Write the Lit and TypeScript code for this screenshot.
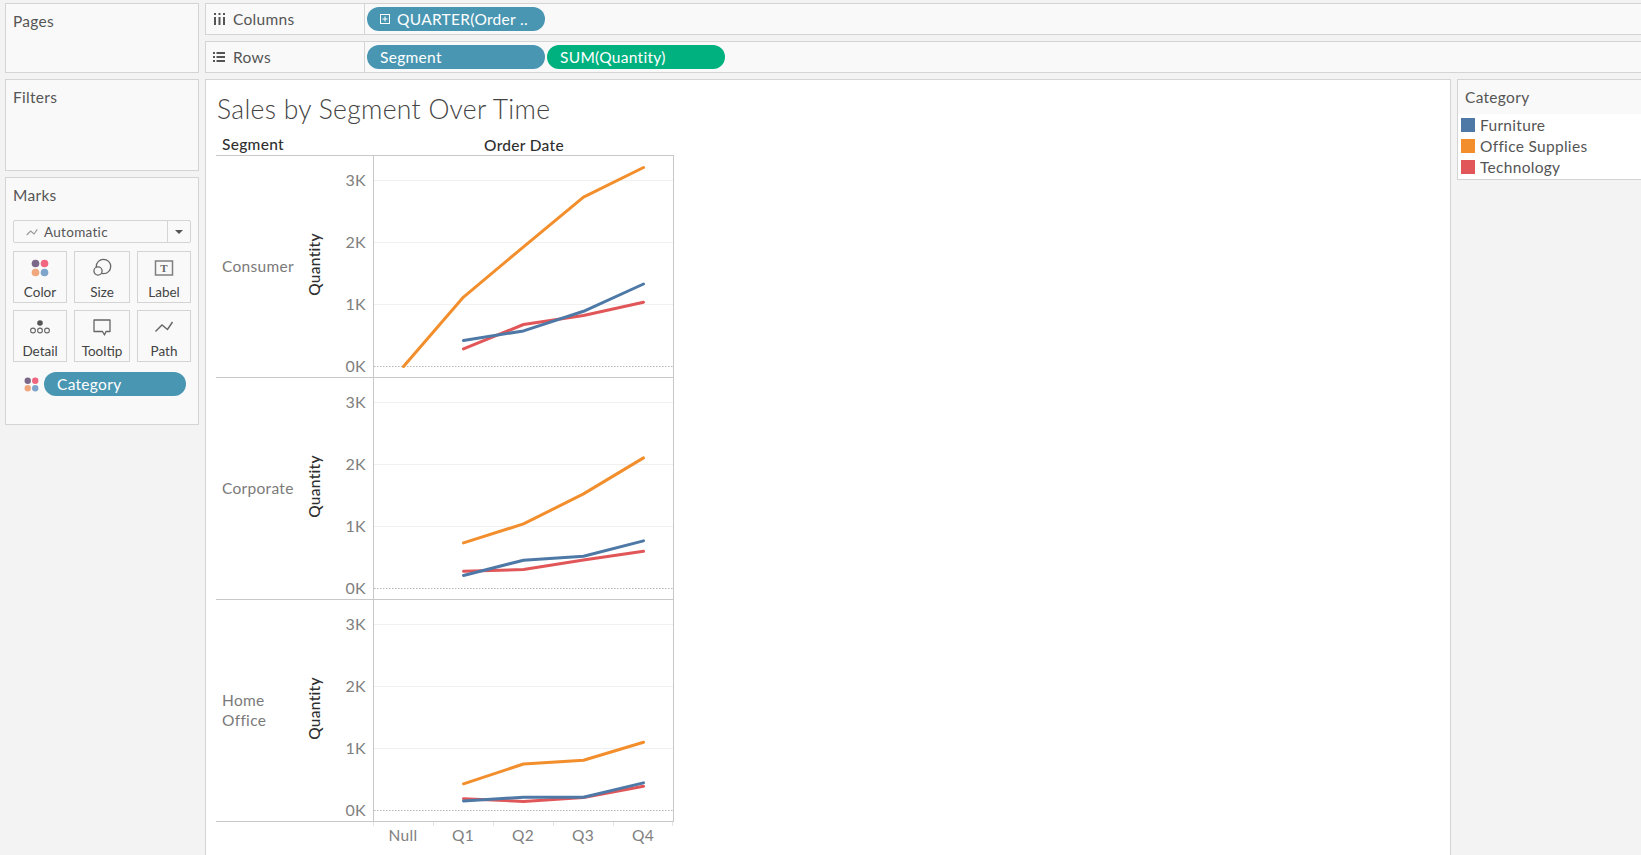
import { LitElement, html, css, svg } from "lit";
import { customElement } from "lit/decorators.js";

const COL = { blue: "#4e79a7", orange: "#f28e2b", red: "#e15759" };
const XS = [103.5, 163.5, 223.5, 283.5, 343.5];
const BASE = 210.5;
const K = 62;

type Facet = {
  label: unknown;
  orange: (number | null)[];
  red: (number | null)[];
  blue: (number | null)[];
};

const FACETS: Facet[] = [
  {
    label: "Consumer",
    orange: [0, 1.12, 1.93, 2.73, 3.21],
    red: [null, 0.284, 0.677, 0.823, 1.037],
    blue: [null, 0.42, 0.574, 0.89, 1.33],
  },
  {
    label: "Corporate",
    orange: [null, 0.735, 1.042, 1.526, 2.106],
    red: [null, 0.279, 0.306, 0.461, 0.6],
    blue: [null, 0.21, 0.456, 0.52, 0.768],
  },
  {
    label: html`Home<br />Office`,
    orange: [null, 0.43, 0.75, 0.81, 1.1],
    red: [null, 0.19, 0.145, 0.21, 0.39],
    blue: [null, 0.155, 0.215, 0.215, 0.445],
  },
];

const pts = (vals: (number | null)[]) =>
  vals
    .map((v, i) => (v === null ? null : `${XS[i]},${(BASE - v * K).toFixed(1)}`))
    .filter(Boolean)
    .join(" ");

const dots = (size: number) => html`<svg class="ico" width=${size} height=${size} viewBox="0 0 16 16">
  <circle cx="4" cy="4" r="3.4" fill="#7b6888"></circle>
  <circle cx="12" cy="4" r="3.4" fill="#f0657f"></circle>
  <circle cx="4" cy="12" r="3.4" fill="#f0a77e"></circle>
  <circle cx="12" cy="12" r="3.4" fill="#7fa4cc"></circle>
</svg>`;

const zig = (w: number, h: number, c: string) => html`<svg class="ico" width=${w} height=${h} viewBox="0 0 18 11">
  <path d="M1 10 L7 4 L12 8.5 L17 1.5" fill="none" stroke=${c} stroke-width="1.7"></path>
</svg>`;

const ICONS: Record<string, unknown> = {
  Color: dots(18),
  Size: html`<svg class="ico" width="20" height="20" viewBox="0 0 20 20">
    <circle cx="11.5" cy="8.5" r="7.2" fill="none" stroke="#666" stroke-width="1.3"></circle>
    <circle cx="6" cy="13" r="4.1" fill="#f9f9f9" stroke="#666" stroke-width="1.3"></circle>
  </svg>`,
  Label: html`<svg class="ico" width="20" height="20" viewBox="0 0 20 20">
    <rect x="1.5" y="3" width="17" height="14" fill="none" stroke="#7f7f7f" stroke-width="1.5"></rect>
    <text x="10" y="14" text-anchor="middle" font-family="Liberation Serif, serif" font-weight="700" font-size="11" fill="#666">T</text>
  </svg>`,
  Detail: html`<svg class="ico" width="20" height="20" viewBox="0 0 20 20">
    <circle cx="10" cy="6" r="2.8" fill="#555"></circle>
    <circle cx="3" cy="13.5" r="2.4" fill="none" stroke="#666" stroke-width="1.1"></circle>
    <circle cx="10" cy="13.5" r="2.4" fill="none" stroke="#666" stroke-width="1.1"></circle>
    <circle cx="17" cy="13.5" r="2.4" fill="none" stroke="#666" stroke-width="1.1"></circle>
  </svg>`,
  Tooltip: html`<svg class="ico" width="20" height="20" viewBox="0 0 20 20">
    <path d="M2 3 H18 V14.5 H14 L12.5 18 L10.5 14.5 H2 Z" fill="none" stroke="#666" stroke-width="1.3" stroke-linejoin="round"></path>
  </svg>`,
  Path: html`<svg class="ico" width="20" height="20" viewBox="0 0 20 20">
    <path d="M1.5 14.5 L8 8 L13.5 12.5 L18.5 5" fill="none" stroke="#666" stroke-width="1.4"></path>
  </svg>`,
};

const MARKS = ["Color", "Size", "Label", "Detail", "Tooltip", "Path"];

@customElement("app-root")
export class AppRoot extends LitElement {
  static styles = css`
    :host {
      display: block;
      font-family: "Lato", "Noto Sans", sans-serif;
      font-size: 15.5px;
      letter-spacing: 0.3px;
      color: #555;
    }
    .root {
      display: flex;
      gap: 6px;
      box-sizing: border-box;
      height: 855px;
      width: 1641px;
      padding: 3px 0 0 5px;
      overflow: hidden;
      background: #f3f3f3;
    }
    .left {
      display: flex;
      flex-direction: column;
      gap: 6px;
      width: 194px;
      flex: none;
    }
    .pane {
      box-sizing: border-box;
      border: 1px solid #d4d4d4;
      background: #f9f9f9;
    }
    .pane-title {
      line-height: 20px;
      padding: 7px 7px 0;
    }
    .pages { height: 70px; }
    .filters { height: 92px; }
    .marks { height: 248px; }
    .select {
      display: flex;
      align-items: center;
      box-sizing: border-box;
      height: 23px;
      margin: 15px 7px 8px;
      border: 1px solid #d4d4d4;
      border-radius: 2px;
      font-size: 13.5px;
    }
    .select-main {
      display: flex;
      align-items: center;
      gap: 6px;
      flex: 1;
      padding-left: 12px;
    }
    .select-arrow {
      display: flex;
      align-items: center;
      justify-content: center;
      width: 22px;
      height: 100%;
      border-left: 1px solid #d4d4d4;
    }
    .caret {
      width: 0;
      height: 0;
      border-left: 4px solid transparent;
      border-right: 4px solid transparent;
      border-top: 4px solid #555;
    }
    .ico { display: block; flex: none; }
    .cards {
      display: grid;
      grid-template-columns: 54px 56px 54px;
      grid-auto-rows: 52px;
      gap: 7px 7px;
      margin: 0 7px;
    }
    .card {
      display: flex;
      flex-direction: column;
      align-items: center;
      box-sizing: border-box;
      border: 1px solid #d4d4d4;
      padding-top: 6px;
      gap: 6px;
      font-size: 13.5px;
      letter-spacing: 0;
      line-height: 16px;
      color: #444;
    }
    .card .slot {
      display: flex;
      align-items: center;
      justify-content: center;
      height: 20px;
    }
    .mark-pill {
      display: flex;
      align-items: center;
      gap: 5px;
      margin: 10px 0 0 18px;
    }
    .pill {
      display: flex;
      align-items: center;
      box-sizing: border-box;
      height: 24px;
      width: 178px;
      border-radius: 12px;
      padding-left: 13px;
      background: #4996b2;
      color: #fff;
      flex: none;
      gap: 7px;
      white-space: nowrap;
    }
    .pill.green { background: #00b180; padding-left: 13px; }
    .mark-pill .pill { width: 142px; }
    .right {
      display: flex;
      flex-direction: column;
      gap: 6px;
      flex: 1;
      min-width: 0;
    }
    .shelf {
      display: flex;
      height: 32px;
      border-right: none;
    }
    .shelf-label {
      display: flex;
      align-items: center;
      box-sizing: border-box;
      width: 159px;
      flex: none;
      border-right: 1px solid #d4d4d4;
      padding-left: 7px;
      gap: 8px;
    }
    .shelf-pills {
      display: flex;
      gap: 2px;
      padding: 3px 0 0 2px;
    }
    .work {
      display: flex;
      gap: 6px;
      flex: 1;
      min-height: 0;
    }
    .view {
      box-sizing: border-box;
      width: 1246px;
      flex: none;
      border: 1px solid #d4d4d4;
      border-bottom: none;
      background: #fff;
      padding-left: 10px;
    }
    .title {
      margin: 14px 0 0 1px;
      line-height: 30px;
      font-size: 26.5px;
      font-weight: 300;
      color: #444;
      letter-spacing: 0.3px;
    }
    .heads {
      display: flex;
      align-items: flex-end;
      box-sizing: border-box;
      width: 458px;
      height: 32px;
      border-bottom: 1px solid #c8c8c8;
      line-height: 20px;
      font-weight: 500;
      color: #2f2f2f;
      font-size: 15.5px;
    }
    .head-seg {
      width: 158px;
      box-sizing: border-box;
      padding: 0 0 1px 6px;
      flex: none;
    }
    .head-date {
      width: 300px;
      text-align: center;
    }
    .facet {
      display: flex;
      box-sizing: border-box;
      width: 458px;
      height: 222px;
      border-bottom: 1px solid #c8c8c8;
    }
    .facet-label {
      display: flex;
      align-items: center;
      box-sizing: border-box;
      width: 84px;
      flex: none;
      padding: 0 0 1px 6px;
      line-height: 20.5px;
      color: #7a7a7a;
    }
    .plot { display: block; flex: none; }
    .plot text { font-family: "Lato", "Noto Sans", sans-serif; }
    .xticks {
      display: grid;
      grid-template-columns: repeat(5, 60px);
      margin-left: 157px;
      width: 301px;
    }
    .xcell { text-align: center; color: #808080; }
    .tick {
      height: 4px;
      border-left: 1px solid #e4e4e4;
    }
    .xcell:last-child .tick { border-right: 1px solid #e4e4e4; }
    .legend {
      flex: 1;
      align-self: flex-start;
      height: 101px;
      border-right: none;
      min-width: 0;
    }
    .legend-title {
      height: 34px;
      line-height: 34px;
      padding-left: 7px;
    }
    .legend-rows {
      background: #fff;
      padding: 0 0 0 3px;
      height: 65px;
      box-sizing: border-box;
    }
    .lrow {
      display: flex;
      align-items: center;
      gap: 5px;
      height: 21px;
      color: #555;
    }
    .swatch {
      width: 14px;
      height: 14px;
      flex: none;
    }
    .sw-blue { background: #4e79a7; }
    .sw-orange { background: #f28e2b; }
    .sw-red { background: #e15759; }
  `;

  private plot(f: Facet) {
    const ys = [3, 2, 1, 0];
    return html`<svg class="plot" width="374" height="221" viewBox="0 0 374 221">
      ${ys.map((v) => {
        const y = BASE - v * K;
        return svg`<line x1="74" x2="373" y1=${y} y2=${y}
            stroke=${v === 0 ? "#b5b5b5" : "#f0f0f0"} stroke-width="1"
            stroke-dasharray=${v === 0 ? "1.5 1.5" : "none"}></line>
          <text x="66" y=${y + 5.5} text-anchor="end" font-size="16" fill="#808080">${v}K</text>`;
      })}
      <line x1="73.5" x2="73.5" y1="0" y2="221" stroke="#c8c8c8"></line>
      <line x1="373.5" x2="373.5" y1="0" y2="221" stroke="#c8c8c8"></line>
      <text transform="translate(20 108.5) rotate(-90)" text-anchor="middle" font-size="15.5" font-weight="500" fill="#2f2f2f">Quantity</text>
      ${(["orange", "red", "blue"] as const).map(
        (k) => svg`<polyline points=${pts(f[k])} fill="none" stroke=${COL[k]} stroke-width="3"
          stroke-linecap="round" stroke-linejoin="round"></polyline>`
      )}
    </svg>`;
  }

  render() {
    return html`<div class="root">
      <div class="left">
        <div class="pane pages"><div class="pane-title">Pages</div></div>
        <div class="pane filters"><div class="pane-title">Filters</div></div>
        <div class="pane marks">
          <div class="pane-title">Marks</div>
          <div class="select">
            <div class="select-main">${zig(12, 8, "#999")}<span>Automatic</span></div>
            <div class="select-arrow"><div class="caret"></div></div>
          </div>
          <div class="cards">
            ${MARKS.map(
              (m) => html`<div class="card"><div class="slot">${ICONS[m]}</div><span>${m}</span></div>`
            )}
          </div>
          <div class="mark-pill">${dots(15)}<div class="pill">Category</div></div>
        </div>
      </div>
      <div class="right">
        <div class="pane shelf">
          <div class="shelf-label">
            <svg class="ico" width="12" height="12" viewBox="0 0 12 12" fill="#555">
              <rect x="1" y="0" width="2" height="2"></rect><rect x="1" y="4" width="2" height="8"></rect>
              <rect x="5.5" y="0" width="2" height="2"></rect><rect x="5.5" y="4" width="2" height="8"></rect>
              <rect x="10" y="0" width="2" height="2"></rect><rect x="10" y="4" width="2" height="8"></rect>
            </svg>
            <span>Columns</span>
          </div>
          <div class="shelf-pills">
            <div class="pill">
              <svg class="ico" width="10" height="10" viewBox="0 0 10 10">
                <rect x="0.5" y="0.5" width="9" height="9" fill="none" stroke="#fff"></rect>
                <path d="M2.5 5 H7.5 M5 2.5 V7.5" stroke="#fff"></path>
              </svg>
              <span>QUARTER(Order ..</span>
            </div>
          </div>
        </div>
        <div class="pane shelf">
          <div class="shelf-label">
            <svg class="ico" width="12" height="10" viewBox="0 0 12 10" fill="#555">
              <rect x="0" y="0" width="2" height="2"></rect><rect x="3.5" y="0" width="8.5" height="2"></rect>
              <rect x="0" y="4" width="2" height="2"></rect><rect x="3.5" y="4" width="8.5" height="2"></rect>
              <rect x="0" y="8" width="2" height="2"></rect><rect x="3.5" y="8" width="8.5" height="2"></rect>
            </svg>
            <span>Rows</span>
          </div>
          <div class="shelf-pills">
            <div class="pill">Segment</div>
            <div class="pill green">SUM(Quantity)</div>
          </div>
        </div>
        <div class="work">
          <div class="view">
            <div class="title">Sales by Segment Over Time</div>
            <div class="heads">
              <div class="head-seg">Segment</div>
              <div class="head-date">Order Date</div>
            </div>
            ${FACETS.map(
              (f) => html`<div class="facet">
                <div class="facet-label"><span>${f.label}</span></div>
                ${this.plot(f)}
              </div>`
            )}
            <div class="xticks">
              ${["Null", "Q1", "Q2", "Q3", "Q4"].map(
                (t) => html`<div class="xcell"><div class="tick"></div>${t}</div>`
              )}
            </div>
          </div>
          <div class="pane legend">
            <div class="legend-title">Category</div>
            <div class="legend-rows">
              <div class="lrow"><div class="swatch sw-blue"></div>Furniture</div>
              <div class="lrow"><div class="swatch sw-orange"></div>Office Supplies</div>
              <div class="lrow"><div class="swatch sw-red"></div>Technology</div>
            </div>
          </div>
        </div>
      </div>
    </div>`;
  }
}
